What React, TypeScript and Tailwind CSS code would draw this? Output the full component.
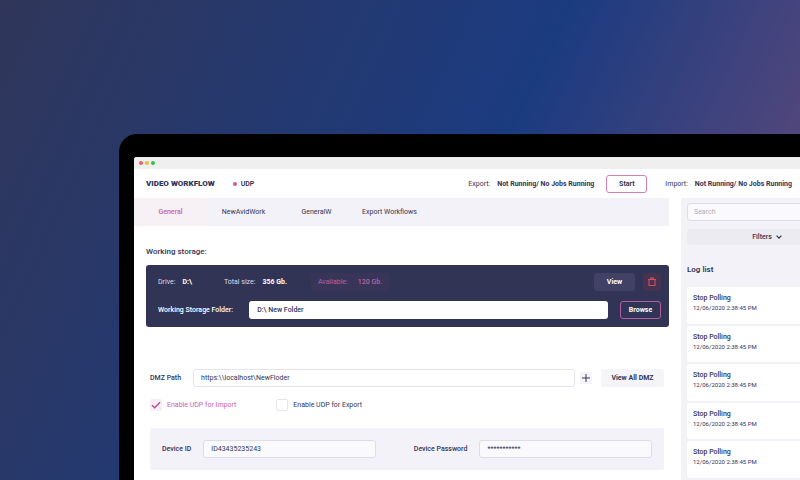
import { useState } from 'react';

const tabs = ['General', 'NewAvidWork', 'GeneralW', 'Export Workflows'];

const logs = [
  { id: 1, title: 'Stop Polling', date: '12/06/2020 2:38:45 PM' },
  { id: 2, title: 'Stop Polling', date: '12/06/2020 2:38:45 PM' },
  { id: 3, title: 'Stop Polling', date: '12/06/2020 2:38:45 PM' },
  { id: 4, title: 'Stop Polling', date: '12/06/2020 2:38:45 PM' },
  { id: 5, title: 'Stop Polling', date: '12/06/2020 2:38:45 PM' },
];

function TitleBar() {
  return (
    <div className="flex h-3 items-center gap-0.5 bg-[#efefef] pl-[5px]">
      <span className="size-1 rounded-full bg-[#ee5f5b]" />
      <span className="size-1 rounded-full bg-[#f0b944]" />
      <span className="size-1 rounded-full bg-[#32bf4e]" />
    </div>
  );
}

function Header() {
  return (
    <header className="flex h-[29px] items-center pr-[61px] pl-3">
      <h1 className="text-[8px] font-black">VIDEO WORKFLOW</h1>
      <span className="ml-[18px] size-1 rounded-full bg-[#c0609f]" />
      <span className="ml-1 font-semibold">UDP</span>
      <p className="ml-auto flex gap-[7px]">
        <span>Export:</span>
        <span className="font-bold">Not Running/ No Jobs Running</span>
      </p>
      <button
        type="button"
        className="mr-[18px] ml-3 h-[18px] w-[41px] rounded-[3px] border border-[#cf82b2] font-bold"
      >
        Start
      </button>
      <p className="flex gap-[7px]">
        <span>Import:</span>
        <span className="font-bold">Not Running/ No Jobs Running</span>
      </p>
    </header>
  );
}

function Tabs() {
  const [active, setActive] = useState('General');

  return (
    <nav className="flex h-7 bg-[#f3f2f8]">
      {tabs.map((tab) => (
        <button
          key={tab}
          type="button"
          onClick={() => setActive(tab)}
          className={
            tab === active
              ? 'w-[73px] bg-[#f7f1f6] font-medium text-[#c865a6]'
              : 'w-[73px] whitespace-nowrap'
          }
        >
          {tab}
        </button>
      ))}
    </nav>
  );
}

function WorkingStorage() {
  return (
    <section className="pl-3">
      <h2 className="text-[8px] leading-[10px] font-medium">Working storage:</h2>
      <div className="mt-2 flex flex-col gap-2.5 rounded-[3px] bg-[#323456] py-2 pr-2 pl-3 text-white">
        <div className="flex h-[18px] items-center">
          <span className="text-[#dcdce8]">Drive:</span>
          <span className="ml-[7px] font-bold">D:\</span>
          <span className="ml-8 text-[#dcdce8]">Total size:</span>
          <span className="ml-[7px] font-bold">356 Gb.</span>
          <p className="ml-6 flex h-[18px] items-center gap-2.5 rounded-[2px] bg-[#383559] px-[7px] text-[#b863a0]">
            <span>Available:</span>
            <span className="font-medium">120 Gb.</span>
          </p>
          <button
            type="button"
            className="ml-auto h-[18px] w-[41px] rounded-[3px] bg-[#404164] font-bold"
          >
            View
          </button>
          <button
            type="button"
            aria-label="Delete"
            className="ml-2 flex size-[18px] items-center justify-center rounded-[3px] bg-[#453351]"
          >
            <svg viewBox="0 0 10 10" className="size-2.5" fill="none" stroke="#cf4f5c" strokeWidth="1.1">
              <path d="M1 2.5h8M3.6 2.2V1.1h2.8v1.1" />
              <path d="M2 2.8v5.7h6V2.8" />
            </svg>
          </button>
        </div>
        <div className="flex items-center">
          <label htmlFor="folder" className="font-medium">
            Working Storage Folder:
          </label>
          <input
            id="folder"
            type="text"
            defaultValue="D:\ New Folder"
            className="ml-4 h-[18px] min-w-0 flex-1 rounded-[3px] bg-white px-2 font-medium text-[#323456]"
          />
          <button
            type="button"
            className="ml-3 h-[18px] w-[41px] rounded-[3px] border border-[#b0609f] font-bold"
          >
            Browse
          </button>
        </div>
      </div>
    </section>
  );
}

function Dmz() {
  return (
    <section className="mt-[42px] pr-[5px] pl-4">
      <div className="flex items-center">
        <label htmlFor="dmz" className="font-medium">
          DMZ Path
        </label>
        <input
          id="dmz"
          type="text"
          defaultValue="https:\\localhost\NewFloder"
          className="ml-3 h-[18px] min-w-0 flex-1 rounded-[3px] border border-[#e4e3ef] bg-white px-[7px]"
        />
        <button
          type="button"
          aria-label="Add path"
          className="ml-[5px] flex size-3 items-center justify-center bg-[#f5f4f9]"
        >
          <svg viewBox="0 0 8 8" className="size-2" fill="none" stroke="#323456">
            <path d="M4 0v8M0 4h8" />
          </svg>
        </button>
        <button
          type="button"
          className="ml-[9px] h-[18px] w-[63px] rounded-[3px] bg-[#f5f4f9] font-bold"
        >
          View All DMZ
        </button>
      </div>

      <div className="mt-3 flex items-center">
        <label className="flex items-center gap-[5px] text-[#c865a6]">
          <span className="grid size-3">
            <input
              type="checkbox"
              defaultChecked
              className="peer col-start-1 row-start-1 size-3 appearance-none rounded-[2px] border border-[#e4e3ef] checked:border-0 checked:bg-[#f8eef5]"
            />
            <svg
              viewBox="0 0 12 12"
              className="pointer-events-none invisible col-start-1 row-start-1 size-3 peer-checked:visible"
              fill="none"
              stroke="#b94f95"
              strokeWidth="1.4"
            >
              <path d="M2 6.2l2.7 2.6L10 3.2" />
            </svg>
          </span>
          Enable UDP for Import
        </label>
        <label className="ml-10 flex items-center gap-[5px]">
          <input
            type="checkbox"
            className="size-3 appearance-none rounded-[2px] border border-[#e4e3ef] bg-white checked:bg-[#b94f95]"
          />
          Enable UDP for Export
        </label>
      </div>

      <div className="mt-[17px] flex h-[42px] items-center rounded-[2px] bg-[#f3f2f8] px-3">
        <label htmlFor="device-id" className="font-medium">
          Device ID
        </label>
        <input
          id="device-id"
          type="text"
          defaultValue="ID43435235243"
          className="ml-3 h-[18px] min-w-0 flex-1 rounded-[3px] border border-[#dddce8] bg-[#fafafd] px-[7px]"
        />
        <label htmlFor="device-password" className="ml-[38px] font-medium">
          Device Password
        </label>
        <input
          id="device-password"
          type="text"
          defaultValue="***********"
          className="ml-3 h-[18px] min-w-0 flex-1 rounded-[3px] border border-[#dddce8] bg-[#fafafd] px-[7px]"
        />
      </div>
    </section>
  );
}

function Sidebar() {
  return (
    <aside className="w-[172px] shrink-0 bg-[#f3f2f8] px-1.5 pt-[5px]">
      <input
        type="search"
        aria-label="Search"
        placeholder="Search"
        className="h-[18px] w-full rounded-[3px] border border-[#dddce8] bg-[#fafafd] px-1.5 placeholder:text-[#adadbd]"
      />
      <button
        type="button"
        className="mt-2 flex h-4 w-full items-center justify-center gap-1 rounded-[3px] bg-[#ebebf1] font-medium"
      >
        Filters
        <svg viewBox="0 0 6 6" className="size-1.5" fill="none" stroke="#323456" strokeWidth="1.2">
          <path d="M0.6 1.7L3 4.2l2.4-2.5" />
        </svg>
      </button>
      <h2 className="mt-5 text-[8px] leading-[10px] font-semibold">Log list</h2>
      <ul className="mt-3 grid h-[191px] auto-rows-fr gap-0.5">
        {logs.map((log) => (
          <li key={log.id} className="rounded-[3px] bg-white px-1.5 pt-1.5">
            <p className="leading-[10px] font-medium">{log.title}</p>
            <p className="text-[6px] leading-[10px]">{log.date}</p>
          </li>
        ))}
      </ul>
    </aside>
  );
}

export default function App() {
  return (
    <div className="h-screen overflow-hidden bg-[linear-gradient(115deg,#30365a_0%,#1b3b80_56%,#50467c_84%)] pt-[134px] pl-[119px] font-[Roboto,sans-serif] text-[7px] leading-[10px] text-[#323456]">
      {/* the laptop runs off the right and bottom edges of the window */}
      <div className="-mr-[53px] min-h-full rounded-tl-[18px] bg-black pt-[23px] pl-[15px]">
        <div className="overflow-hidden rounded-tl-[3px] bg-white">
          <TitleBar />
          <Header />
          <div className="flex gap-3">
            <main className="min-w-0 flex-1 pb-10">
              <Tabs />
              <div className="pt-[21px]">
                <WorkingStorage />
                <Dmz />
              </div>
            </main>
            <Sidebar />
          </div>
        </div>
      </div>
    </div>
  );
}
